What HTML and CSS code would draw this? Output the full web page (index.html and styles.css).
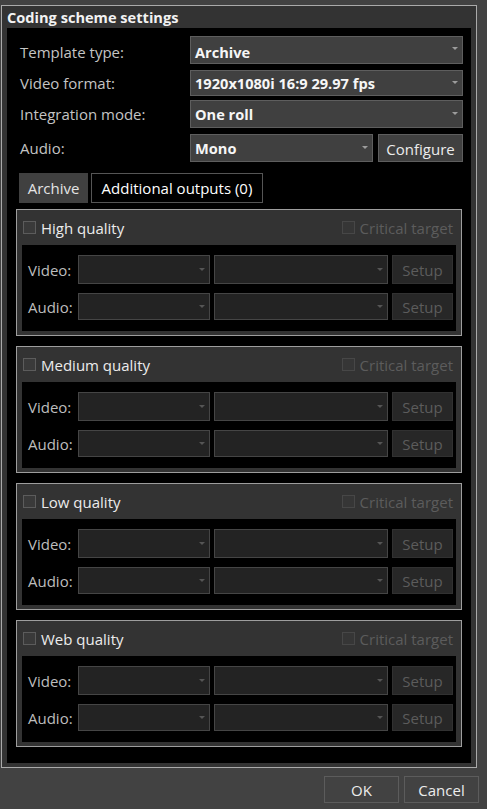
FILE: index.html
```html
<!DOCTYPE html>
<html>
<head>
<meta charset="utf-8">
<title>Coding scheme settings</title>
<link rel="stylesheet" href="styles.css">
</head>
<body>
<div class="dialog">
  <div class="group">
    <div class="group-title">Coding scheme settings</div>
    <div class="group-body">
      <div class="form">
        <div class="row r1"><span class="lbl">Template type:</span><div class="combo">Archive<span class="arrow"></span></div></div>
        <div class="row r2"><span class="lbl">Video format:</span><div class="combo">1920x1080i 16:9 29.97 fps<span class="arrow"></span></div></div>
        <div class="row r3"><span class="lbl">Integration mode:</span><div class="combo">One roll<span class="arrow"></span></div></div>
        <div class="row r4"><span class="lbl">Audio:</span><div class="combo combo-short">Mono<span class="arrow"></span></div><div class="btn configure">Configure</div></div>
      </div>
      <div class="tabs">
        <div class="tab active">Archive</div>
        <div class="tab">Additional outputs (0)</div>
      </div>

      <div class="qbox">
        <div class="qhead"><span class="check"></span><span class="qname">High quality</span><span class="crit"><span class="check dis"></span>Critical target</span></div>
        <div class="qbody">
          <div class="qrow qv"><span class="qlbl">Video:</span><div class="dcombo c1"><span class="arrow"></span></div><div class="dcombo c2"><span class="arrow"></span></div><div class="setup">Setup</div></div>
          <div class="qrow qa"><span class="qlbl">Audio:</span><div class="dcombo c1"><span class="arrow"></span></div><div class="dcombo c2"><span class="arrow"></span></div><div class="setup">Setup</div></div>
        </div>
      </div>

      <div class="qbox">
        <div class="qhead"><span class="check"></span><span class="qname">Medium quality</span><span class="crit"><span class="check dis"></span>Critical target</span></div>
        <div class="qbody">
          <div class="qrow qv"><span class="qlbl">Video:</span><div class="dcombo c1"><span class="arrow"></span></div><div class="dcombo c2"><span class="arrow"></span></div><div class="setup">Setup</div></div>
          <div class="qrow qa"><span class="qlbl">Audio:</span><div class="dcombo c1"><span class="arrow"></span></div><div class="dcombo c2"><span class="arrow"></span></div><div class="setup">Setup</div></div>
        </div>
      </div>

      <div class="qbox">
        <div class="qhead"><span class="check"></span><span class="qname">Low quality</span><span class="crit"><span class="check dis"></span>Critical target</span></div>
        <div class="qbody">
          <div class="qrow qv"><span class="qlbl">Video:</span><div class="dcombo c1"><span class="arrow"></span></div><div class="dcombo c2"><span class="arrow"></span></div><div class="setup">Setup</div></div>
          <div class="qrow qa"><span class="qlbl">Audio:</span><div class="dcombo c1"><span class="arrow"></span></div><div class="dcombo c2"><span class="arrow"></span></div><div class="setup">Setup</div></div>
        </div>
      </div>

      <div class="qbox">
        <div class="qhead"><span class="check"></span><span class="qname">Web quality</span><span class="crit"><span class="check dis"></span>Critical target</span></div>
        <div class="qbody">
          <div class="qrow qv"><span class="qlbl">Video:</span><div class="dcombo c1"><span class="arrow"></span></div><div class="dcombo c2"><span class="arrow"></span></div><div class="setup">Setup</div></div>
          <div class="qrow qa"><span class="qlbl">Audio:</span><div class="dcombo c1"><span class="arrow"></span></div><div class="dcombo c2"><span class="arrow"></span></div><div class="setup">Setup</div></div>
        </div>
      </div>
    </div>
  </div>
  <div class="footer">
    <div class="btn fbtn">OK</div>
    <div class="btn fbtn">Cancel</div>
  </div>
</div>
</body>
</html>
```
FILE: styles.css
```css
* { box-sizing: border-box; }
html, body {
  margin: 0;
  padding: 0;
  width: 487px;
  height: 809px;
  overflow: hidden;
  background: #424242;
  font-family: "Open Sans", "Noto Sans", "Liberation Sans", sans-serif;
  font-size: 15px;
}
.dialog {
  padding: 5px 0 0 1px;
}
.group {
  width: 476px;
  height: 763px;
  border: 1px solid #aaaaaa;
  background: #333333;
  padding: 0 5px 4px 5px;
  display: flex;
  flex-direction: column;
}
.group-title {
  height: 22px;
  line-height: 22px;
  font-weight: bold;
  font-size: 14.6px;
  color: #f2f2f2;
  white-space: nowrap;
}
.group-body {
  flex: 1;
  background: #000;
  padding: 8px 8px 0 13px;
}
.row {
  display: flex;
  align-items: center;
}
.r1 { height: 28px; margin-bottom: 6px; }
.r2 { height: 26px; margin-bottom: 4px; }
.r3 { height: 28px; margin-bottom: 6px; }
.r4 { height: 28px; }
.lbl {
  width: 170px;
  color: #c4c4c4;
  white-space: nowrap;
}
.r1 .lbl { padding-top: 3px; }
.combo {
  position: relative;
  width: 273px;
  height: 100%;
  background: #404040;
  border: 1px solid #5e5e5e;
  color: #f6f6f6;
  font-weight: bold;
  font-size: 14.6px;
  padding: 0 0 0 4px;
  display: flex;
  align-items: center;
  white-space: nowrap;
}
.r1 .combo { padding-top: 3px; }
.combo-short { width: 183px; }
.arrow {
  position: absolute;
  right: 4px;
  top: 50%;
  margin-top: -2px;
  width: 0;
  height: 0;
  border-left: 3px solid transparent;
  border-right: 3px solid transparent;
  border-top: 3px solid #9c9c9c;
}
.r1 .arrow { margin-top: -3px; }
.btn {
  display: flex;
  align-items: center;
  justify-content: center;
  background: #404040;
  border: 1px solid #5e5e5e;
  color: #ececec;
}
.configure {
  width: 85px;
  height: 100%;
  margin-left: 5px;
  padding-top: 1px;
}
.tabs {
  display: flex;
  margin: 11px 0 0 -1px;
  height: 30px;
}
.tab {
  display: flex;
  align-items: center;
  justify-content: center;
  color: #ffffff;
  border: 1px solid #555555;
  width: 172px;
  margin-left: 3px;
  white-space: nowrap;
}
.tab.active {
  width: 69px;
  margin-left: 0;
  background: #404040;
  border-color: #404040;
  color: #e4e4e4;
}
.qbox {
  width: 446px;
  margin: 6px 0 0 -4px;
  border: 1px solid #9e9e9e;
  background: #333333;
  padding: 0 5px 4px 5px;
}
.qbox + .qbox { margin-top: 10px; }
.qhead {
  height: 35px;
  display: flex;
  align-items: center;
  padding: 0 3px 0 1px;
}
.check {
  width: 13px;
  height: 13px;
  background: #3a3a3a;
  border: 1px solid #5c5c5c;
  flex: none;
}
.check.dis {
  background: #363636;
  border-color: #474747;
  margin-right: 5px;
}
.qname {
  color: #ececec;
  margin-left: 5px;
}
.crit {
  margin-left: auto;
  display: flex;
  align-items: center;
  color: #5c5c5c;
  white-space: nowrap;
}
.qbody {
  height: 86px;
  background: #000;
  padding: 10px 3px 0 6px;
}
.qrow {
  display: flex;
  align-items: stretch;
}
.qv { height: 29px; margin-bottom: 9px; }
.qa { height: 27px; }
.qlbl {
  width: 50px;
  color: #bdbdbd;
  display: flex;
  align-items: center;
}
.dcombo {
  position: relative;
  background: #232323;
  border: 1px solid #454545;
}
.dcombo .arrow { border-top-color: #555555; }
.c1 { width: 132px; }
.c2 { width: 174px; margin-left: 4px; }
.setup {
  width: 61px;
  margin-left: 4px;
  background: #272727;
  border: 1px solid #313131;
  color: #5c5c5c;
  display: flex;
  align-items: center;
  justify-content: center;
}
.footer {
  display: flex;
  justify-content: flex-end;
  padding-right: 8px;
  margin-top: 8px;
}
.fbtn {
  width: 75px;
  height: 27px;
  margin-left: 5px;
  background: #424242;
  border-color: #5c5c5c;
}
```
